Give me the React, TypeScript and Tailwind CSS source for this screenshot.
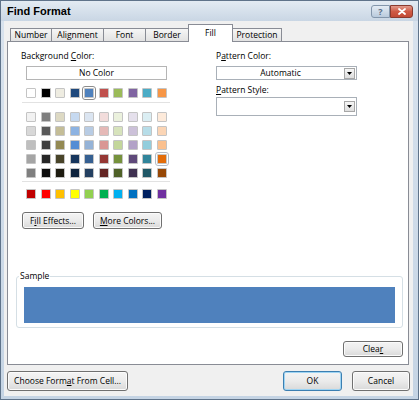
import type { ReactNode } from "react";

const theme = ["#FFFFFF", "#000000", "#EEECE1", "#1F497D", "#4F81BD", "#C0504D", "#9BBB59", "#8064A2", "#4BACC6", "#F79646"];

const tints = [
  ["#F2F2F2", "#7F7F7F", "#DDD9C3", "#C6D9F0", "#DBE5F1", "#F2DCDB", "#EBF1DD", "#E5E0EC", "#DBEEF3", "#FDEADA"],
  ["#D8D8D8", "#595959", "#C4BD97", "#8DB3E2", "#B8CCE4", "#E5B9B7", "#D7E3BC", "#CCC1D9", "#B7DDE8", "#FBD5B5"],
  ["#BFBFBF", "#3F3F3F", "#938953", "#548DD4", "#95B3D7", "#D99694", "#C3D69B", "#B2A2C7", "#92CDDC", "#FAC08F"],
  ["#A5A5A5", "#262626", "#494429", "#17365D", "#366092", "#953734", "#76923C", "#5F497A", "#31859B", "#E36C09"],
  ["#7F7F7F", "#0C0C0C", "#1D1B10", "#0F243E", "#244061", "#632423", "#4F6128", "#3F3151", "#205867", "#974806"],
];

const standard = ["#C00000", "#FF0000", "#FFC000", "#FFFF00", "#92D050", "#00B050", "#00B0F0", "#0070C0", "#002060", "#7030A0"];

const tabs = [
  { label: "Number", w: "w-[42px]" },
  { label: "Alignment", w: "w-[53px]" },
  { label: "Font", w: "w-[43px]" },
  { label: "Border", w: "w-[44px]" },
  { label: "Fill", w: "w-[45px]", active: true },
  { label: "Protection", w: "w-[50px]" },
];

/** One colour cell of the palette. `mark` draws the selection/hover frame. */
function Swatch({ color, mark }: { color: string; mark?: "selected" | "hover" }) {
  const frame =
    mark === "selected"
      ? "outline outline-1 outline-offset-1 outline-[#8c8c8c]"
      : mark === "hover"
        ? "outline outline-1 outline-offset-1 outline-[#b4bcc6]"
        : "";
  return <div className={`w-[10px] h-[10px] border border-[#c4c4c4] rounded-[1px] ${frame}`} style={{ backgroundColor: color }} />;
}

function Row({ colors, selected, hover }: { colors: string[]; selected?: number; hover?: number }) {
  return (
    <div className="flex gap-x-[4.5px]">
      {colors.map((c, i) => (
        <Swatch key={i} color={c} mark={i === selected ? "selected" : i === hover ? "hover" : undefined} />
      ))}
    </div>
  );
}

function Btn({ children, className = "", focused = false }: { children: ReactNode; className?: string; focused?: boolean }) {
  return (
    <div
      className={`flex items-center justify-center rounded-[3px] border bg-linear-to-b from-[#f4f4f4] via-[#ebebeb] to-[#d9d9d9] text-black ${
        focused ? "border-[#3c7fb1] shadow-[inset_0_0_0_1px_#9ed4f3]" : "border-[#707070] shadow-[inset_0_0_0_1px_#fbfbfb]"
      } ${className}`}
    >
      {children}
    </div>
  );
}

function Arrow() {
  return (
    <svg width="5" height="3" viewBox="0 0 5 3">
      <polygon points="0,0 5,0 2.5,3" fill="#000" />
    </svg>
  );
}

function Combo({ text, className = "" }: { text?: string; className?: string }) {
  return (
    <div className={`flex items-center w-[141px] border border-[#a9b0b8] bg-white ${className}`}>
      <div className="flex-1 text-center">{text}</div>
      <div className="w-[11px] h-[11px] mr-px border border-[#a7a7a7] bg-linear-to-b from-[#f6f6f6] to-[#dedede] flex items-center justify-center">
        <Arrow />
      </div>
    </div>
  );
}

export default function App() {
  return (
    <div
      className="w-[419px] h-[400px] flex flex-col border border-[#5f738a] bg-linear-to-b from-[#d9e3ee] to-[#c5d4e4] text-[8.5px] leading-[12px] text-black"
      style={{ fontFamily: "'Open Sans', 'Noto Sans', sans-serif" }}
    >
      {/* title bar */}
      <div className="h-[20px] flex items-center pl-[6px] pr-[5px] bg-linear-to-b from-[#e3ebf3] to-[#c9d6e4]">
        <span className="flex-1 font-bold text-[11px] leading-none" style={{ fontFamily: "'Liberation Sans', Arial, sans-serif" }}>
          Find Format
        </span>
        <div className="flex items-center mt-[1px]">
          <div className="w-[19px] h-[13px] rounded-l-[3px] border border-[#8396ab] bg-linear-to-b from-[#e4ecf4] to-[#b9cadc] flex items-center justify-center text-[9px] font-bold text-[#5b6f86] leading-none">
            ?
          </div>
          <div className="w-[23px] h-[13px] rounded-r-[3px] border border-[#8a3b2f] bg-linear-to-b from-[#e19a8c] via-[#cf5a45] to-[#c14a35] flex items-center justify-center">
            <svg width="8" height="7" viewBox="0 0 8 7">
              <path d="M1 1 L7 6 M7 1 L1 6" stroke="#fff" strokeWidth="1.8" strokeLinecap="round" />
            </svg>
          </div>
        </div>
      </div>

      {/* client area */}
      <div className="flex-1 ml-[3px] mr-[5px] mb-[3px] bg-[#f0f0f0] pl-[3px] pt-[3px] flex flex-col">
        {/* tab strip */}
        <div className="relative z-10 h-[18px] flex items-end ml-[3px]">
          {tabs.map((t, i) =>
            t.active ? (
              <div key={t.label} className={`${t.w} h-[18px] -ml-px border border-b-0 border-[#898c95] bg-white flex items-center justify-center pb-[2px]`}>
                {t.label}
              </div>
            ) : (
              <div
                key={t.label}
                className={`${t.w} h-[13px] mb-px ${i === 0 ? "" : "-ml-px"} border border-b-0 border-[#898c95] bg-linear-to-b from-[#f6f6f6] to-[#e2e2e2] flex items-center justify-center`}
              >
                {t.label}
              </div>
            ),
          )}
        </div>

        {/* tab panel */}
        <div className="-mt-px w-[402px] h-[324px] border border-[#898c95] bg-white flex flex-col">
          <div className="flex pt-[8px] pl-[13px]">
            {/* background colour */}
            <div className="w-[150px] flex flex-col">
              <div className="h-[12px]">
                Background <span className="underline">C</span>olor:
              </div>
              <div className="mt-[4px] ml-[5px] w-[141px] h-[14px] border border-[#b5b5b5] flex items-center justify-center">No Color</div>
              <div className="mt-[8px] ml-[5px]">
                <Row colors={theme} selected={4} />
              </div>
              <div className="mt-[4px] ml-[1px] w-[148px] h-px bg-[#e2e2e2]" />
              <div className="mt-[9px] ml-[5px] flex flex-col gap-y-[4px]">
                {tints.map((r, i) => (
                  <Row key={i} colors={r} hover={i === 3 ? 9 : undefined} />
                ))}
              </div>
              <div className="mt-[3px] ml-[1px] w-[148px] h-px bg-[#e2e2e2]" />
              <div className="mt-[7px] ml-[5px]">
                <Row colors={standard} />
              </div>
              <div className="mt-[13px] ml-[1px] flex gap-[9px]">
                <Btn className="w-[62px] h-[17px]">
                  F<span className="underline">i</span>ll Effects...
                </Btn>
                <Btn className="w-[69px] h-[17px]">
                  <span className="underline">M</span>ore Colors...
                </Btn>
              </div>
            </div>

            {/* pattern */}
            <div className="ml-[45px] w-[141px] flex flex-col">
              <div className="h-[12px]">
                P<span className="underline">a</span>ttern Color:
              </div>
              <Combo text="Automatic" className="mt-[4px] h-[14px]" />
              <div className="mt-[4px] h-[12px]">
                <span className="underline">P</span>attern Style:
              </div>
              <Combo className="mt-px h-[19px]" />
            </div>
          </div>

          {/* sample */}
          <div className="relative mt-[47px] ml-[8px] w-[387px] h-[52px] border border-[#d5dfe5] rounded-[3px] pt-[10px] px-[7px]">
            <span className="absolute left-[2px] -top-[7px] bg-white px-px">Sample</span>
            <div className="h-[36px] bg-[#4f81bd]" />
          </div>

          <div className="mt-[13px] self-end mr-[5px]">
            <Btn className="w-[60px] h-[16px]">
              Clea<span className="underline">r</span>
            </Btn>
          </div>
        </div>

        {/* footer buttons */}
        <div className="mt-[6px] h-[20px] flex pr-[3px]">
          <Btn className="w-[121px] h-[20px]">
            Choose Form<span className="underline">a</span>t From Cell...
          </Btn>
          <Btn focused className="ml-auto w-[59px] h-[20px]">
            OK
          </Btn>
          <Btn className="ml-[10px] w-[58px] h-[20px]">Cancel</Btn>
        </div>
      </div>
    </div>
  );
}
